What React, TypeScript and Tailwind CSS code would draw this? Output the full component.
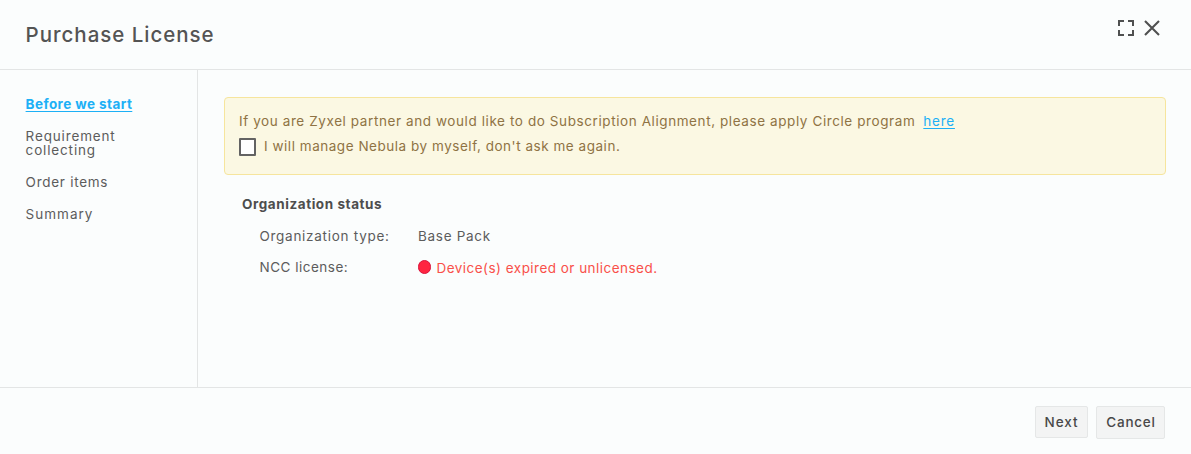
const steps = [
  { label: "Requirement collecting", className: "tracking-[0.85px]" },
  { label: "Order items", className: "tracking-[0.73px]" },
  { label: "Summary", className: "tracking-[1px]" },
];

function ExpandIcon() {
  return (
    <svg className="h-4 w-4" viewBox="0 0 16 16" fill="none" stroke="#4f5050" strokeWidth="2">
      <path d="M1 6V1h5M10 1h5v5M15 10v5h-5M6 15H1v-5" />
    </svg>
  );
}

function CloseIcon() {
  return (
    <svg className="h-4 w-4" viewBox="0 0 16 16" fill="none" stroke="#4f5050" strokeWidth="2.1">
      <path d="M1 1l14 14M15 1L1 15" />
    </svg>
  );
}

export default function App() {
  return (
    <div className="flex h-[454px] w-full flex-col bg-[#fbfdfd] font-['Inter','Liberation_Sans',sans-serif] text-[13.5px] text-[#5c5c5c]">
      {/* Header */}
      <header className="flex h-[70px] shrink-0 items-start justify-between border-b border-[#e3e5e5] pr-[31px] pl-[25.6px]">
        <h1 className="mt-[20px] text-[20.5px] leading-[30px] font-medium tracking-[0.97px] whitespace-nowrap text-[#545454]">Purchase License</h1>
        <div className="mt-5 flex gap-[10px]">
          <button aria-label="Expand"><ExpandIcon /></button>
          <button aria-label="Close"><CloseIcon /></button>
        </div>
      </header>

      <div className="flex min-h-0 flex-1">
        {/* Steps */}
        <nav className="w-[198px] shrink-0 border-r border-[#e3e5e5] pt-[27px] pl-[25.6px]">
          <ul className="flex flex-col gap-[18px] leading-[14px]">
            <li>
              <a href="#" className="font-bold tracking-[0.42px] text-[#1cb0f6] underline underline-offset-2">Before we start</a>
            </li>
            {steps.map((step) => (
              <li key={step.label} className={`w-[110px] ${step.className}`}>{step.label}</li>
            ))}
          </ul>
        </nav>

        <main className="min-w-0 flex-1 pt-[27px] pr-[25px] pl-[26px]">
          {/* Partner notice */}
          <div className="h-[78px] rounded border border-[#f6e59d] bg-[#fbf8e3] pt-[13px] pl-[14px] leading-5 whitespace-nowrap text-[#8f7344]">
            <p className="flex gap-2">
              <span className="tracking-[0.59px]">If you are Zyxel partner and would like to do Subscription Alignment, please apply Circle program</span>
              <a href="#" className="tracking-[0.75px] text-[#1cb0f6] underline underline-offset-2">here</a>
            </p>
            <label className="mt-[6px] flex items-start gap-2">
              <input type="checkbox" className="mt-px h-[18px] w-[17px] appearance-none rounded-[1px] border-2 border-[#636363] bg-white" />
              <span className="-mt-px tracking-[0.53px]">I will manage Nebula by myself, don't ask me again.</span>
            </label>
          </div>

          {/* Organization */}
          <section className="pt-[19px] pl-[18px] whitespace-nowrap">
            <h2 className="leading-5 font-bold tracking-[0.57px] text-[#4d4d4d]">Organization status</h2>
            <dl className="mt-[12px] grid grid-cols-[158.5px_auto] gap-y-[11px] pl-[17.5px] leading-5">
              <dt className="tracking-[0.72px]">Organization type:</dt>
              <dd className="tracking-[0.7px]">Base Pack</dd>
              <dt className="tracking-[0.5px]">NCC license:</dt>
              <dd className="flex items-start gap-[5.5px] text-[#f9504a]">
                <span className="mt-[3px] h-[14px] w-[13px] rounded-full border border-[#d9143c] bg-[#ff2440]" />
                <span className="mt-px tracking-[0.47px]">Device(s) expired or unlicensed.</span>
              </dd>
            </dl>
          </section>
        </main>
      </div>

      <footer className="flex h-[67px] shrink-0 items-start justify-end gap-2 border-t border-[#e3e5e5] pt-[18px] pr-[26px] font-medium text-[#484848]">
        <button className="h-8 w-[53px] rounded-[2px] border border-[#e5e7e7] bg-[#f3f4f4] pt-px tracking-[0.9px]">Next</button>
        <button className="h-[33px] w-[69px] rounded-[2px] border border-[#e5e7e7] bg-[#f3f4f4] pl-px tracking-[0.75px]">Cancel</button>
      </footer>
    </div>
  );
}
